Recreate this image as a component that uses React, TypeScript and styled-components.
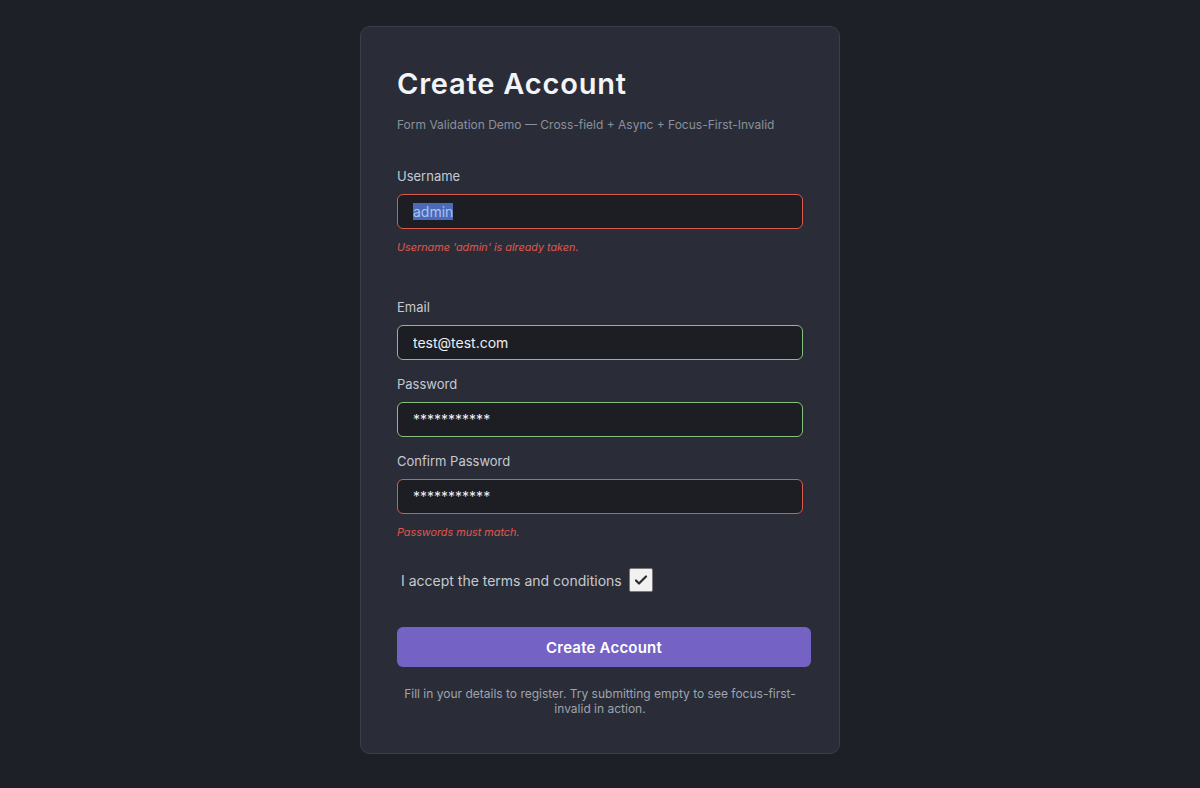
import { useEffect, useRef } from 'react';
import styled, { createGlobalStyle } from 'styled-components';

const GlobalStyle = createGlobalStyle`
  html, body {
    margin: 0;
    padding: 0;
    background: #1d2027;
    font-family: 'Inter', 'Noto Sans', sans-serif;
  }
`;

const Page = styled.div`
  min-height: 788px;
  display: flex;
  justify-content: center;
  padding-top: 26px;
  box-sizing: border-box;
`;

const Card = styled.form`
  width: 480px;
  height: 728px;
  box-sizing: border-box;
  padding: 39px 36px 36px;
  background: #2a2d38;
  border: 1px solid #3b3e4a;
  border-radius: 10px;
`;

const Title = styled.h1`
  margin: 0;
  font-size: 29px;
  line-height: 35px;
  font-weight: 600;
  color: #f3f4f6;
  letter-spacing: 0.8px;
`;

const Subtitle = styled.p`
  margin: 16px 0 33px;
  font-size: 12px;
  line-height: 16px;
  color: #8b909c;
`;

const Field = styled.div<{ $spacing: number }>`
  display: flex;
  flex-direction: column;
  margin-bottom: ${(p) => p.$spacing}px;
`;

const Label = styled.label`
  font-size: 13px;
  line-height: 20px;
  color: #c6c9d1;
  margin-bottom: 8px;
`;

const Input = styled.input<{ $state: 'error' | 'valid' }>`
  height: 35px;
  box-sizing: border-box;
  padding: 0 15px;
  background: #1c1e24;
  border: 1px solid ${(p) => (p.$state === 'error' ? '#d95a4c' : '#86c07e')};
  border-radius: 6px;
  color: #eceef2;
  font-family: 'Inter', 'Noto Sans', sans-serif;
  font-size: 14px;
  outline: none;
  &::selection {
    background: #4a6bb8;
    color: #a9c4f2;
  }
`;

const ErrorText = styled.span`
  margin-top: 11px;
  font-size: 10.8px;
  line-height: 16px;
  font-style: italic;
  color: #e0574d;
`;

const CheckRow = styled.label`
  display: flex;
  align-items: center;
  gap: 7px;
  padding-left: 4px;
  margin-top: 27px;
  font-size: 14px;
  color: #c6c9d1;
`;

const Box = styled.span`
  width: 22px;
  height: 22px;
  display: inline-flex;
  align-items: center;
  justify-content: center;
  background: #f1f1f1;
  border: 1px solid #7a7a7a;
  border-radius: 2px;
`;

const SubmitButton = styled.button`
  width: 100%;
  padding: 0 4px;
  box-sizing: content-box;
  height: 40px;
  margin-top: 35px;
  background: #7462c4;
  border: none;
  border-radius: 6px;
  color: #ffffff;
  font-family: 'Inter', 'Noto Sans', sans-serif;
  font-size: 15px;
  font-weight: 600;
  letter-spacing: 0.2px;
`;

const Hint = styled.p`
  margin: 19px 0 0;
  text-align: center;
  font-size: 12px;
  line-height: 15px;
  color: #9fa3ad;
`;

function App() {
  const usernameRef = useRef<HTMLInputElement>(null);

  useEffect(() => {
    usernameRef.current?.focus();
    usernameRef.current?.select();
  }, []);

  return (
    <Page>
      <GlobalStyle />
      <Card onSubmit={(e) => e.preventDefault()}>
        <Title>Create Account</Title>
        <Subtitle>Form Validation Demo — Cross-field + Async + Focus-First-Invalid</Subtitle>

        <Field $spacing={41}>
          <Label>Username</Label>
          <Input ref={usernameRef} $state="error" defaultValue="admin" />
          <ErrorText>Username 'admin' is already taken.</ErrorText>
        </Field>

        <Field $spacing={14}>
          <Label>Email</Label>
          <Input $state="valid" defaultValue="test@test.com" />
        </Field>

        <Field $spacing={14}>
          <Label>Password</Label>
          <Input $state="valid" defaultValue="***********" />
        </Field>

        <Field $spacing={0}>
          <Label>Confirm Password</Label>
          <Input $state="error" defaultValue="***********" />
          <ErrorText>Passwords must match.</ErrorText>
        </Field>

        <CheckRow>
          I accept the terms and conditions
          <Box>
            <svg width="16" height="16" viewBox="0 0 16 16">
              <path d="M3 8.5l3 3 7-7" fill="none" stroke="#2b2b2b" strokeWidth="2.2" strokeLinecap="round" strokeLinejoin="round" />
            </svg>
          </Box>
        </CheckRow>

        <SubmitButton type="submit">Create Account</SubmitButton>

        <Hint>Fill in your details to register. Try submitting empty to see focus-first-invalid in action.</Hint>
      </Card>
    </Page>
  );
}

export default App;
